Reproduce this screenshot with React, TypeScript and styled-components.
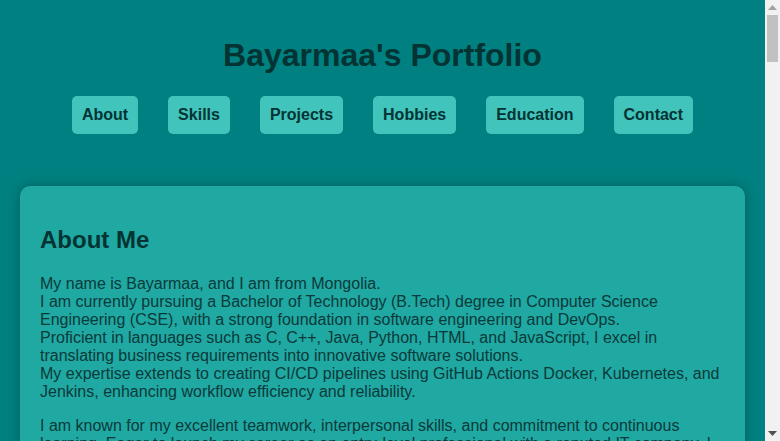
import React from "react";
import styled, { createGlobalStyle } from "styled-components";

const GlobalStyle = createGlobalStyle`
  html, body {
    margin: 0;
    padding: 0;
    background: #008080;
  }
  body {
    font-family: "Liberation Sans", Arial, sans-serif;
    color: #033333;
  }
`;

const Page = styled.div`
  margin-right: 15px;
`;

const ScrollTrack = styled.div`
  position: fixed;
  top: 0;
  right: 0;
  width: 15px;
  height: 100vh;
  background: #f1f1f1;
  display: flex;
  flex-direction: column;
  align-items: center;
`;

const ScrollArrow = styled.div`
  width: 15px;
  height: 15px;
  display: flex;
  align-items: center;
  justify-content: center;
  flex: none;
`;

const ScrollThumb = styled.div`
  width: 11px;
  height: 47px;
  background: #c1c1c1;
  flex: none;
`;

const ScrollSpacer = styled.div`
  flex: 1;
`;

const Header = styled.header`
  padding: 16px 20px;
  text-align: center;
`;

const Title = styled.h1`
  font-size: 32px;
  font-weight: bold;
  margin: 21.44px 0;
  color: #033333;
`;

const Nav = styled.nav`
  display: flex;
  justify-content: center;
  gap: 30px;
`;

const NavButton = styled.a`
  display: inline-block;
  padding: 10px;
  background: #40c4bc;
  border-radius: 5px;
  color: #033333;
  font-size: 16px;
  font-weight: bold;
  text-decoration: none;
  line-height: 18.4px;
`;

const Main = styled.main`
  padding: 36px 20px 40px;
`;

const Card = styled.section`
  background: #20a8a2;
  border-radius: 10px;
  padding: 20px;
  box-shadow: 0 0 12px rgba(0, 0, 0, 0.25);
`;

const Heading = styled.h2`
  font-size: 24px;
  font-weight: bold;
  margin: 20px 0 21px;
  color: #033333;
`;

const Para = styled.p`
  font-size: 16px;
  margin: 16px 0;
  line-height: 18px;
  color: #0a3a3a;
`;

const links = ["About", "Skills", "Projects", "Hobbies", "Education", "Contact"];

export default function App() {
  return (
    <>
      <GlobalStyle />
      <Page>
        <Header>
          <Title>Bayarmaa's Portfolio</Title>
          <Nav>
            {links.map((l) => (
              <NavButton key={l} href={`#${l.toLowerCase()}`}>
                {l}
              </NavButton>
            ))}
          </Nav>
        </Header>
        <Main>
          <Card id="about">
            <Heading>About Me</Heading>
            <Para>
              My name is Bayarmaa, and I am from Mongolia.
              <br />
              I am currently pursuing a Bachelor of Technology (B.Tech) degree in Computer Science
              Engineering (CSE), with a strong foundation in software engineering and DevOps.
              <br />
              Proficient in languages such as C, C++, Java, Python, HTML, and JavaScript, I excel in
              translating business requirements into innovative software solutions.
              <br />
              My expertise extends to creating CI/CD pipelines using GitHub Actions Docker, Kubernetes,
              and Jenkins, enhancing workflow efficiency and reliability.
            </Para>
            <Para>
              I am known for my excellent teamwork, interpersonal skills, and commitment to continuous
              learning. Eager to launch my career as an entry-level professional with a reputed IT
              company, I aim to contribute my skills and grow alongside innovative teams.
            </Para>
          </Card>
        </Main>
      </Page>
      <ScrollTrack aria-hidden="true">
        <ScrollArrow>
          <svg width="9" height="5" viewBox="0 0 9 5">
            <polygon points="0,5 9,5 4.5,0" fill="#a3a3a3" />
          </svg>
        </ScrollArrow>
        <ScrollThumb />
        <ScrollSpacer />
        <ScrollArrow>
          <svg width="9" height="5" viewBox="0 0 9 5">
            <polygon points="0,0 9,0 4.5,5" fill="#505050" />
          </svg>
        </ScrollArrow>
      </ScrollTrack>
    </>
  );
}
